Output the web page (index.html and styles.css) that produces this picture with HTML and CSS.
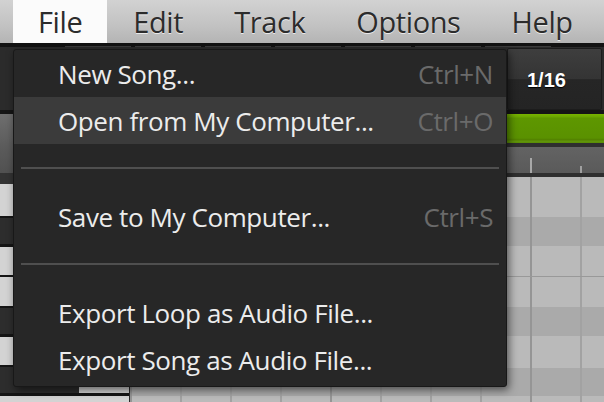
FILE: index.html
```html
<!DOCTYPE html>
<html>
<head>
<meta charset="utf-8">
<link rel="stylesheet" href="styles.css">
</head>
<body>
<div class="app">
  <div class="menubar">
    <div class="mb-item active">File</div>
    <div class="mb-item">Edit</div>
    <div class="mb-item">Track</div>
    <div class="mb-item">Options</div>
    <div class="mb-item">Help</div>
  </div>
  <div class="topline">
    <span class="seg s1"></span><span class="seg"></span><span class="seg"></span><span class="seg"></span><span class="seg"></span><span class="seg"></span><span class="seg"></span>
  </div>
  <div class="toolbar">
    <div class="tb-spacer"></div>
    <div class="grid-btn"><span class="grid-label">1/16</span></div>
  </div>
  <div class="black-sep"></div>
  <div class="editor">
    <div class="left-col">
      <div class="track-head"></div>
      <div class="key black-top"></div>
      <div class="key white h32"></div>
      <div class="key black h26"><span class="bk"></span></div>
      <div class="key white h28"></div>
      <div class="key white h29"></div>
      <div class="key black h27"><span class="bk"></span></div>
      <div class="key white h28"></div>
      <div class="key black h26"><span class="bk"></span></div>
      <div class="key white h20"></div>
    </div>
    <div class="right-col">
      <div class="green"></div>
      <div class="dline"></div>
      <div class="ruler"></div>
      <div class="dline"></div>
      <div class="row light r40"></div>
      <div class="row dark r29"></div>
      <div class="row light r30 octave"></div>
      <div class="row light r30"></div>
      <div class="row dark r29"></div>
      <div class="row light r32"></div>
      <div class="row dark r28"></div>
      <div class="row light r20"></div>
    </div>
  </div>

  <div class="menu">
    <div class="mi"><span class="label">New Song...</span><span class="sc">Ctrl+N</span></div>
    <div class="mi hover"><span class="label">Open from My Computer...</span><span class="sc">Ctrl+O</span></div>
    <div class="sep"></div>
    <div class="mi"><span class="label">Save to My Computer...</span><span class="sc">Ctrl+S</span></div>
    <div class="sep"></div>
    <div class="mi"><span class="label">Export Loop as Audio File...</span></div>
    <div class="mi"><span class="label">Export Song as Audio File...</span></div>
  </div>
</div>
</body>
</html>
```

FILE: styles.css
```css
html, body {
  margin: 0;
  padding: 0;
  width: 604px;
  height: 402px;
  overflow: hidden;
  background: #2b2b2b;
}

.app {
  position: relative;
  width: 604px;
  height: 402px;
  overflow: hidden;
  font-family: "Open Sans", "DejaVu Sans", sans-serif;
}

/* ---------- menubar ---------- */
.menubar {
  height: 43px;
  display: flex;
  padding-left: 13px;
  background: linear-gradient(#d2d2d2, #c2c2c2 60%, #b4b4b4);
}

.mb-item {
  padding: 0 25px 0 26px;
  height: 43px;
  line-height: 43px;
  font-size: 29px;
  letter-spacing: -0.4px;
  color: #2c2c2c;
  text-shadow: 0 1px 0 rgba(255, 255, 255, 0.7);
}

.mb-item.active {
  background: #fbfbfb;
  text-shadow: none;
  padding-left: 25px;
}

.topline {
  height: 4px;
  background: #121212;
  display: flex;
  align-items: flex-end;
  gap: 4px;
}

.seg {
  width: 66px;
  height: 1px;
  background: #3c3c3c;
}

.seg.s1 {
  margin-left: 65px;
}

/* ---------- toolbar ---------- */
.toolbar {
  height: 63px;
  display: flex;
  background: #2b2b2b;
}

.tb-spacer {
  flex: 1;
}

.grid-btn {
  margin-top: 1px;
  margin-right: 2px;
  width: 95px;
  height: 62px;
  box-sizing: border-box;
  border: 1px solid #1c1c1c;
  border-radius: 2px;
  background: linear-gradient(#3e3e3e, #343434 50%, #262626 51%, #242424);
  display: flex;
  align-items: center;
  padding-left: 19px;
}

.grid-label {
  font-family: "Liberation Sans", Arial, sans-serif;
  font-weight: bold;
  font-size: 20px;
  color: #ffffff;
  margin-top: 2px;
  text-shadow: 0 1px 1px #000;
}

.black-sep {
  height: 4px;
  background: #151515;
}

/* ---------- editor ---------- */
.editor {
  display: flex;
}

.left-col {
  width: 130px;
  flex: none;
  box-sizing: border-box;
  border-right: 1px solid #2a2a2a;
  display: flex;
  flex-direction: column;
}

.track-head {
  height: 59px;
  background: linear-gradient(#6e6e6e, #5a5a5a 60%, #515151);
}

.key {
  box-sizing: border-box;
  flex: none;
}

.key.black-top {
  height: 11px;
  background: #333333;
}

.key.white {
  background: #d3d3d3;
  border-bottom: 2px solid #151515;
}

.key.black {
  display: flex;
  background: #d3d3d3;
  border-bottom: 3px solid #151515;
}

.bk {
  width: 79px;
  background: #2d2d2d;
}

.h32 { height: 34px; }
.h26 { height: 29px; }
.h27 { height: 29px; }
.h28 { height: 30px; }
.h29 { height: 31px; }
.h20 { height: 20px; }

.right-col {
  flex: 1;
  display: flex;
  flex-direction: column;
}

.green {
  height: 29px;
  background: linear-gradient(#78b300 0, #6aa600 3px, #5e9700 4px, #5a9100 24px, #527f00 26px, #62980a 27px, #5a8c05 29px);
}

.dline {
  height: 4px;
  background: #2f2f2f;
}

.ruler {
  height: 26px;
  background:
    repeating-linear-gradient(90deg, #a8a8a8 0 2px, transparent 2px 200px) 0 11px / 100% 15px no-repeat,
    repeating-linear-gradient(90deg, #a0a0a0 0 2px, transparent 2px 50px) 0 19px / 100% 7px no-repeat,
    linear-gradient(#636363, #5a5a5a);
}

.row {
  flex: none;
  box-sizing: border-box;
  background-image: repeating-linear-gradient(90deg,
    #959595 0 2px, transparent 2px 50px,
    #a2a2a2 50px 52px, transparent 52px 100px,
    #a2a2a2 100px 102px, transparent 102px 150px,
    #a2a2a2 150px 152px, transparent 152px 200px);
}

.row.light { background-color: #bababa; }
.row.dark { background-color: #aaaaaa; }
.row.octave { border-bottom: 1px solid #999999; height: 31px; }

.r40 { height: 40px; }
.r29 { height: 29px; }
.r30 { height: 30px; }
.r32 { height: 32px; }
.r28 { height: 28px; }
.r20 { height: 20px; }

/* ---------- dropdown menu ---------- */
.menu {
  position: absolute;
  left: 13px;
  top: 49px;
  width: 494px;
  box-sizing: border-box;
  padding-bottom: 3px;
  background: #272727;
  border: 1px solid #181818;
  border-radius: 3px;
  box-shadow: 2px 3px 8px rgba(0, 0, 0, 0.55);
}

.mi {
  height: 47px;
  display: flex;
  justify-content: space-between;
  align-items: center;
  padding: 0 13px 0 44px;
  font-size: 26px;
  letter-spacing: -0.4px;
  line-height: 48px;
  color: #ececec;
}

.mi.hover {
  background: #3b3b3b;
}

.sc {
  color: #6a6a6a;
}

.sep {
  height: 2px;
  margin: 23px 7px 24px;
  background: #4f4f4f;
}
```
